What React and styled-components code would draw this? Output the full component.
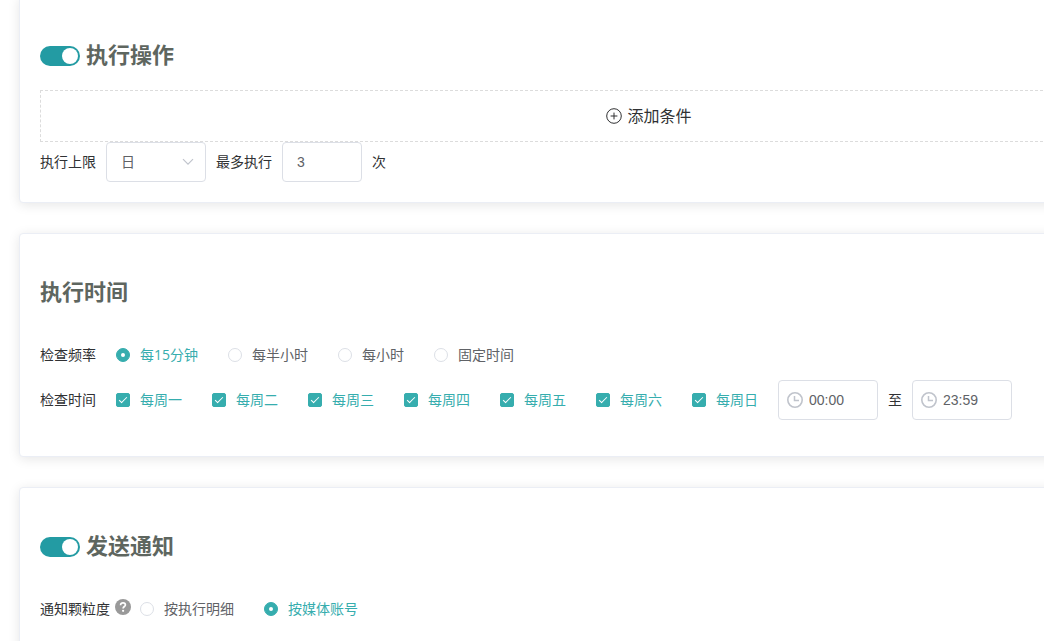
import React from "react";
import styled, { createGlobalStyle } from "styled-components";

const GlobalStyle = createGlobalStyle`
  *, *::before, *::after { box-sizing: border-box; }
  html, body { margin: 0; background: #fff; }
  body, button, input, select {
    font-family: "Open Sans", "Noto Sans CJK SC", sans-serif;
    font-size: 14px;
  }
`;

const Viewport = styled.div`
  height: 100vh;
  overflow: hidden;
`;

const Page = styled.main`
  display: flex;
  flex-direction: column;
  gap: 30px;
  min-width: 1299px;
  padding: 0 20px 0 19px;
  color: #303133;
`;

const Card = styled.section`
  padding: 20px;
  border: 1px solid #ebeef5;
  border-radius: 4px;
  background: #fff;
  box-shadow: 0 2px 12px rgba(0, 0, 0, 0.1);
  &:first-child { margin-top: -4px; }
`;

const TitleBar = styled.header`
  display: flex;
  align-items: center;
  gap: 6px;
  height: 30px;
  margin: 22px 0 21px;
`;

const Title = styled.h2`
  margin: 0;
  color: #5e665f;
  font-size: 22px;
  font-weight: 700;
  line-height: 30px;
`;

const Switch = styled.input`
  appearance: none;
  display: flex;
  align-items: center;
  width: 40px;
  height: 20px;
  margin: 4px 0 0;
  padding: 2px;
  border-radius: 10px;
  background: #c0ccda;
  cursor: pointer;
  &::before {
    content: "";
    width: 16px;
    height: 16px;
    border-radius: 50%;
    background: #fff;
  }
  &:checked {
    justify-content: flex-end;
    background: #239ba3;
  }
`;

const AddButton = styled.button`
  display: flex;
  align-items: center;
  justify-content: center;
  gap: 5px;
  width: 100%;
  height: 52px;
  padding: 0;
  border: 1px dashed #dcdcdc;
  background: #fff;
  color: #303133;
  font-size: 16px;
  line-height: 24px;
  cursor: pointer;
`;

const Row = styled.div`
  display: flex;
  align-items: center;
  gap: 10px;
  height: 40px;
  line-height: 20px;
`;

const Form = styled.div`
  display: flex;
  flex-direction: column;
  gap: 5px;
  padding: 8px 0 16px;
`;

const Group = styled.div`
  display: flex;
  align-items: center;
  height: 40px;
  line-height: 20px;
`;

const GroupLabel = styled.span`
  margin-right: ${(p) => (p.$tight ? "5px" : "20px")};
`;

const Options = styled.div`
  display: flex;
  gap: 30px;
`;

const Option = styled.label`
  display: flex;
  align-items: center;
  gap: 10px;
  color: #606266;
  cursor: pointer;
  &:has(input:checked) { color: #36adae; }
`;

const RadioInput = styled.input`
  appearance: none;
  display: grid;
  place-content: center;
  width: 14px;
  height: 14px;
  margin: 0;
  border: 1px solid #dcdfe6;
  border-radius: 50%;
  background: #fff;
  &:checked {
    border-color: #36adae;
    background: #36adae;
  }
  &:checked::before {
    content: "";
    width: 4px;
    height: 4px;
    border-radius: 50%;
    background: #fff;
  }
`;

const CheckInput = styled.input`
  appearance: none;
  display: grid;
  place-content: center;
  width: 14px;
  height: 14px;
  margin: 0;
  border: 1px solid #dcdfe6;
  border-radius: 2px;
  background: #fff;
  &:checked {
    border-color: #36adae;
    background: #36adae;
  }
  &:checked::before {
    content: "";
    width: 4px;
    height: 8px;
    margin-bottom: 2px;
    border: solid #fff;
    border-width: 0 1px 1px 0;
    transform: rotate(45deg);
  }
`;

const Field = styled.span`
  display: flex;
  align-items: center;
  width: ${(p) => p.$width || "100px"};
  height: 40px;
  padding: ${(p) => (p.$icon ? "0 8px" : "0 11px 0 14px")};
  gap: 6px;
  border: 1px solid #dcdfe6;
  border-radius: 4px;
  background: #fff;
  color: #c0c4cc;
  svg { flex: none; }
`;

const TextInput = styled.input`
  flex: 1;
  min-width: 0;
  padding: 0;
  border: 0;
  outline: 0;
  background: transparent;
  color: #606266;
  font-family: "Liberation Sans", sans-serif;
`;

const Select = styled.select`
  appearance: none;
  flex: 1;
  min-width: 0;
  padding: 0 0 2px;
  border: 0;
  outline: 0;
  background: transparent;
  color: #606266;
`;

const TimeRange = styled.div`
  display: flex;
  align-items: center;
  gap: 10px;
  margin-left: 20px;
`;

const HelpButton = styled.button`
  display: flex;
  margin: 0 9px 4px 0;
  padding: 0;
  border: 0;
  background: none;
`;

const PlusIcon = () => (
  <svg width="16" height="16" viewBox="0 0 16 16" fill="none" stroke="currentColor" aria-hidden="true">
    <circle cx="8" cy="8" r="7.3" />
    <path d="M8 4.6v6.8M4.6 8h6.8" />
  </svg>
);

const ChevronIcon = () => (
  <svg width="12" height="8" viewBox="0 0 12 8" fill="none" stroke="currentColor" aria-hidden="true">
    <path d="M1 1.2 6 6.2 11 1.2" strokeWidth="1.2" />
  </svg>
);

const ClockIcon = () => (
  <svg width="16" height="16" viewBox="0 0 16 16" fill="none" stroke="currentColor" aria-hidden="true">
    <circle cx="8" cy="8" r="7.2" strokeWidth="1.6" />
    <path d="M7.5 4v4.5H12" strokeWidth="1.5" />
  </svg>
);

const HelpIcon = () => (
  <svg width="16" height="16" viewBox="0 0 16 16" fill="none" aria-hidden="true">
    <circle cx="8" cy="8" r="8" fill="#999" />
    <path d="M5.6 6.2C5.6 4.6 6.6 3.8 8 3.8s2.4.9 2.4 2.1c0 1.5-2.3 1.7-2.3 3.5" stroke="#fff" strokeWidth="1.7" />
    <circle cx="8.1" cy="11.8" r="1.1" fill="#fff" />
  </svg>
);

const frequencies = ["每15分钟", "每半小时", "每小时", "固定时间"];
const days = ["每周一", "每周二", "每周三", "每周四", "每周五", "每周六", "每周日"];
const granularities = ["按执行明细", "按媒体账号"];

function RadioOptions({ name, items, selected }) {
  return (
    <Options>
      {items.map((item) => (
        <Option key={item}>
          <RadioInput type="radio" name={name} defaultChecked={item === selected} />
          {item}
        </Option>
      ))}
    </Options>
  );
}

function TimeField({ label, value }) {
  return (
    <Field $icon>
      <ClockIcon />
      <TextInput aria-label={label} defaultValue={value} />
    </Field>
  );
}

export default function App() {
  return (
    <Viewport>
      <GlobalStyle />
      <Page>
        <Card>
          <TitleBar>
            <Switch type="checkbox" role="switch" id="action-switch" defaultChecked />
            <Title><label htmlFor="action-switch">执行操作</label></Title>
          </TitleBar>
          <AddButton type="button"><PlusIcon />添加条件</AddButton>
          <Row>
            <label htmlFor="period">执行上限</label>
            <Field>
              <Select id="period" defaultValue="日"><option>日</option></Select>
              <ChevronIcon />
            </Field>
            <label htmlFor="limit">最多执行</label>
            <Field $width="80px"><TextInput id="limit" defaultValue="3" /></Field>
            <span>次</span>
          </Row>
        </Card>

        <Card>
          <TitleBar><Title>执行时间</Title></TitleBar>
          <Form>
            <Group role="radiogroup" aria-labelledby="frequency">
              <GroupLabel id="frequency">检查频率</GroupLabel>
              <RadioOptions name="frequency" items={frequencies} selected="每15分钟" />
            </Group>
            <Group role="group" aria-labelledby="days">
              <GroupLabel id="days">检查时间</GroupLabel>
              <Options>
                {days.map((day) => (
                  <Option key={day}><CheckInput type="checkbox" defaultChecked />{day}</Option>
                ))}
              </Options>
              <TimeRange>
                <TimeField label="开始时间" value="00:00" />
                <span>至</span>
                <TimeField label="结束时间" value="23:59" />
              </TimeRange>
            </Group>
          </Form>
        </Card>

        <Card>
          <TitleBar>
            <Switch type="checkbox" role="switch" id="notify-switch" defaultChecked />
            <Title><label htmlFor="notify-switch">发送通知</label></Title>
          </TitleBar>
          <Form>
            <Group role="radiogroup" aria-labelledby="granularity">
              <GroupLabel id="granularity" $tight>通知颗粒度</GroupLabel>
              <HelpButton type="button" aria-label="说明"><HelpIcon /></HelpButton>
              <RadioOptions name="granularity" items={granularities} selected="按媒体账号" />
            </Group>
          </Form>
        </Card>
      </Page>
    </Viewport>
  );
}
